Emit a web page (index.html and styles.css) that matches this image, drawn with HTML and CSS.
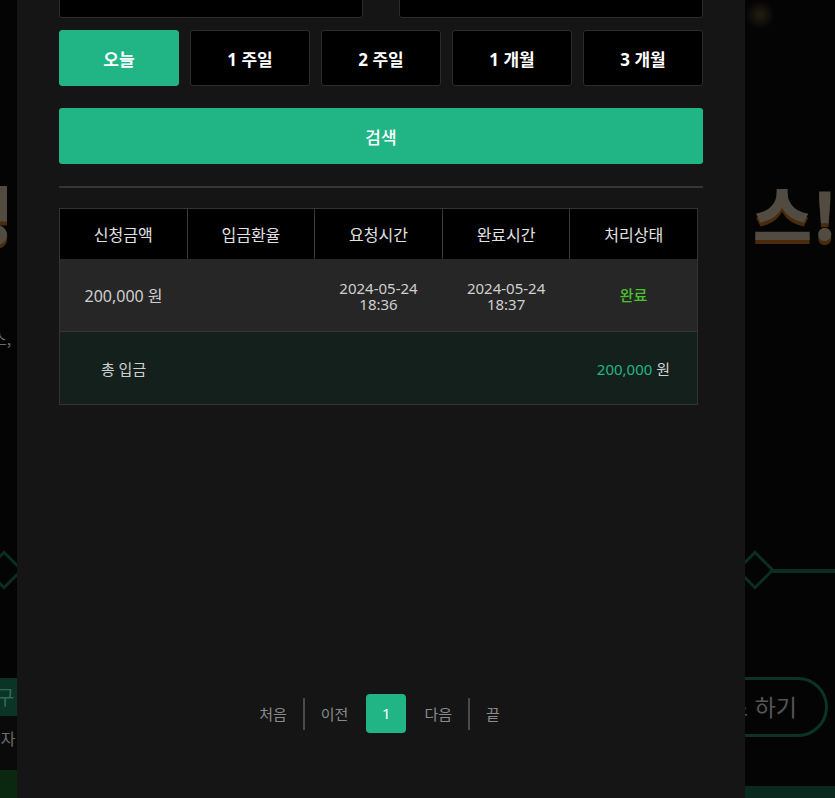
FILE: index.html
```html
<!DOCTYPE html>
<html lang="ko">
<head>
    <meta charset="UTF-8">
    <meta name="viewport" content="width=device-width, initial-scale=1.0">
    <title>입금내역</title>
    <link rel="stylesheet" href="styles.css">
</head>
<body>
    <!-- 모달 뒤의 페이지 (어둡게 처리됨) -->
    <div class="backdrop">
        <div class="bd-glow"></div>
        <div class="bd-title-left">성</div>
        <div class="bd-title-right">스!</div>
        <div class="bd-sub">스,</div>
        <div class="bd-diamond bd-diamond-left"></div>
        <div class="bd-diamond bd-diamond-right"></div>
        <div class="bd-line"></div>
        <div class="bd-strip-green">구</div>
        <div class="bd-strip-dark">면자</div>
        <div class="bd-strip-bottom"></div>
        <div class="bd-pill">스 하기</div>
        <div class="bd-strip-right"></div>
    </div>

    <div class="modal">
        <div class="date-range">
            <div class="date-input"></div>
            <div class="date-input"></div>
        </div>

        <div class="period-buttons">
            <button class="period-btn active">오늘</button>
            <button class="period-btn">1 주일</button>
            <button class="period-btn">2 주일</button>
            <button class="period-btn">1 개월</button>
            <button class="period-btn">3 개월</button>
        </div>

        <button class="search-btn">검색</button>

        <div class="divider"></div>

        <table class="history">
            <thead>
                <tr>
                    <th>신청금액</th>
                    <th>입금환율</th>
                    <th>요청시간</th>
                    <th>완료시간</th>
                    <th>처리상태</th>
                </tr>
            </thead>
            <tbody>
                <tr class="row">
                    <td class="amount">200,000 원</td>
                    <td></td>
                    <td class="date">2024-05-24<br>18:36</td>
                    <td class="date">2024-05-24<br>18:37</td>
                    <td class="status">완료</td>
                </tr>
                <tr class="total">
                    <td>총 입금</td>
                    <td></td>
                    <td></td>
                    <td></td>
                    <td><span class="total-amount">200,000</span> 원</td>
                </tr>
            </tbody>
        </table>

        <div class="pagination">
            <a class="page-link">처음</a>
            <span class="page-sep"></span>
            <a class="page-link">이전</a>
            <a class="page-num">1</a>
            <a class="page-link">다음</a>
            <span class="page-sep"></span>
            <a class="page-link">끝</a>
        </div>
    </div>
</body>
</html>
```

FILE: styles.css
```css
* {
    margin: 0;
    padding: 0;
    box-sizing: border-box;
    font-family: 'Noto Sans', 'Noto Sans CJK KR', sans-serif;
}

body {
    background: #040404;
    color: #fff;
    height: 798px;
    overflow: hidden;
    position: relative;
}

/* 배경 페이지 */
.backdrop {
    position: absolute;
    inset: 0;
    z-index: 0;
}

.bd-glow {
    position: absolute;
    left: 745px;
    top: 0;
    width: 30px;
    height: 30px;
    border-radius: 50%;
    background: radial-gradient(circle, rgba(70, 62, 36, 0.45), transparent 70%);
}

.bd-title-left,
.bd-title-right {
    position: absolute;
    top: 166px;
    font-size: 64px;
    font-weight: 900;
    color: #524b42;
    text-shadow: 0 4px 0 #4a2c0c;
    font-family: 'Noto Sans CJK KR', sans-serif;
}

.bd-title-left {
    left: -46px;
}

.bd-title-right {
    left: 753px;
}

.bd-sub {
    position: absolute;
    left: -8px;
    top: 326px;
    font-size: 16px;
    color: #6a6a6a;
    font-family: 'Noto Sans CJK KR', sans-serif;
}

.bd-diamond {
    position: absolute;
    width: 28px;
    height: 28px;
    border: 3px solid #0a2e22;
    transform: rotate(45deg);
}

.bd-diamond-left {
    left: -10px;
    top: 556px;
}

.bd-diamond-right {
    left: 741px;
    top: 556px;
}

.bd-line {
    position: absolute;
    left: 770px;
    top: 569px;
    width: 70px;
    height: 4px;
    background: #0a2e22;
}

.bd-strip-green {
    position: absolute;
    left: 0;
    top: 678px;
    width: 20px;
    height: 38px;
    background: #0b3326;
    color: #2c6a56;
    font-size: 20px;
    line-height: 38px;
    text-indent: -4px;
    font-family: 'Noto Sans CJK KR', sans-serif;
}

.bd-strip-dark {
    position: absolute;
    left: 0;
    top: 716px;
    width: 20px;
    height: 54px;
    background: #0a0a0a;
    color: #6a6a6a;
    font-size: 16px;
    line-height: 44px;
    text-indent: -14px;
    white-space: nowrap;
    overflow: hidden;
    font-family: 'Noto Sans CJK KR', sans-serif;
}

.bd-strip-bottom {
    position: absolute;
    left: 0;
    top: 770px;
    width: 20px;
    height: 28px;
    background: #0a2810;
}

.bd-pill {
    position: absolute;
    left: 690px;
    top: 677px;
    width: 138px;
    height: 60px;
    border: 3px solid #0b3326;
    border-radius: 30px;
    color: #555;
    font-size: 23px;
    line-height: 52px;
    text-align: right;
    padding-right: 28px;
    font-family: 'Noto Sans CJK KR', sans-serif;
}

.bd-strip-right {
    position: absolute;
    left: 740px;
    top: 786px;
    width: 100px;
    height: 12px;
    background: #0a2a20;
}

/* 모달 */
.modal {
    position: relative;
    z-index: 1;
    display: flow-root;
    margin-left: 17px;
    width: 728px;
    height: 798px;
    background: #151515;
    padding: 0 42px;
}

.date-range {
    display: flex;
    gap: 36px;
    margin-top: -32px;
}

.date-input {
    flex: 1;
    height: 50px;
    background: #000;
    border: 1px solid #2c2c2c;
    border-radius: 3px;
}

.period-buttons {
    display: flex;
    gap: 11px;
    margin-top: 12px;
}

.period-btn {
    flex: 1;
    height: 56px;
    background: #000;
    border: 1px solid #2c2c2c;
    border-radius: 3px;
    color: #fff;
    font-size: 17px;
    font-weight: 700;
    cursor: pointer;
}

.period-btn.active {
    background: #21b586;
    border-color: #21b586;
}

.search-btn {
    display: block;
    width: 100%;
    height: 56px;
    margin-top: 22px;
    background: #21b586;
    border: none;
    border-radius: 3px;
    color: #fff;
    font-size: 17px;
    font-weight: 500;
    cursor: pointer;
}

.divider {
    height: 2px;
    background: #353535;
    margin-top: 22px;
}

.history {
    width: 639px;
    margin-top: 20px;
    border-collapse: collapse;
    table-layout: fixed;
    border: 1px solid #333;
}

.history th {
    height: 50px;
    background: #000;
    color: #e2e2e2;
    font-size: 16px;
    font-weight: 400;
    border-right: 1px solid #3a3a3a;
}

.history th:last-child {
    border-right: none;
}

.history td {
    height: 73px;
    text-align: center;
    color: #cfcfcf;
    font-size: 15px;
}

.history .amount {
    font-size: 16px;
}

.history .row td {
    background: #262626;
    border-bottom: 1px solid #353535;
}

.history .date {
    line-height: 16px;
    padding-top: 2px;
}

.history .status {
    color: #4cc12e;
    font-weight: 500;
}

.history .total td {
    background: #14201c;
}

.total-amount {
    color: #21b586;
}

.pagination {
    display: flex;
    justify-content: center;
    align-items: center;
    gap: 16px;
    margin-top: 289px;
    margin-left: -3px;
}

.page-link {
    color: #8a8a8a;
    font-size: 15px;
    cursor: pointer;
}

.page-sep {
    width: 2px;
    height: 32px;
    background: #4a4a4a;
}

.page-num {
    width: 40px;
    height: 39px;
    line-height: 39px;
    text-align: center;
    background: #21b586;
    border-radius: 4px;
    color: #fff;
    font-size: 15px;
    margin: 0 2px;
}
```
